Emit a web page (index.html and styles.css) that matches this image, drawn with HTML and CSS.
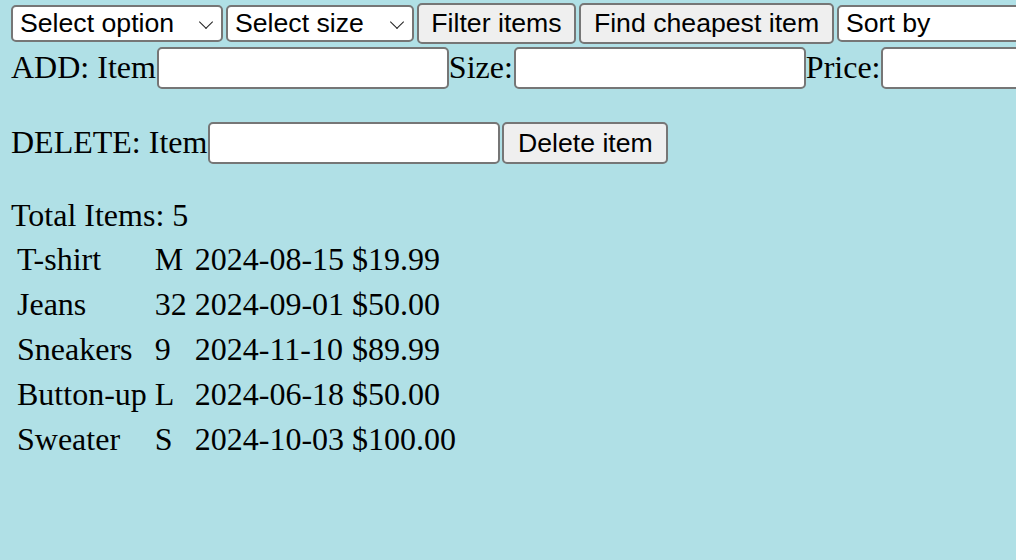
FILE: index.html
```html
<!DOCTYPE html>
<html>
<head>
<meta charset="utf-8">
<link rel="stylesheet" href="styles.css">
</head>
<body>
<div class="page">
  <div class="row row-tools">
    <span class="sel sel-option"><select class="ctl select"><option>Select option</option></select></span>
    <span class="sel sel-size"><select class="ctl select"><option>Select size</option></select></span>
    <button class="ctl btn btn-filter">Filter items</button>
    <button class="ctl btn btn-cheap">Find cheapest item</button>
    <span class="sel sel-sort"><select class="ctl select"><option>Sort by</option></select></span>
  </div>
  <div class="row row-add">
    <span class="label">ADD: Item</span>
    <input class="ctl field" type="text">
    <span class="label">Size:</span>
    <input class="ctl field" type="text">
    <span class="label">Price:</span>
    <input class="ctl field" type="text">
  </div>
  <div class="row row-delete">
    <span class="label">DELETE: Item</span>
    <input class="ctl field field-del" type="text">
    <button class="ctl btn btn-delete">Delete item</button>
  </div>
  <div class="total">Total Items: 5</div>
  <table class="items">
    <tr><td>T-shirt</td><td>M</td><td>2024-08-15</td><td>$19.99</td></tr>
    <tr><td>Jeans</td><td>32</td><td>2024-09-01</td><td>$50.00</td></tr>
    <tr><td>Sneakers</td><td>9</td><td>2024-11-10</td><td>$89.99</td></tr>
    <tr><td>Button-up</td><td>L</td><td>2024-06-18</td><td>$50.00</td></tr>
    <tr><td>Sweater</td><td>S</td><td>2024-10-03</td><td>$100.00</td></tr>
  </table>
</div>
</body>
</html>
```

FILE: styles.css
```css
html, body {
  margin: 0;
  padding: 0;
  background: #b0e0e6;
  overflow: hidden;
}

.page {
  padding: 3px 0 0 11px;
  font-family: "Liberation Serif", "Times New Roman", serif;
  font-size: 32px;
  line-height: 36.8px;
  color: #000;
  width: 1005px;
  overflow: hidden;
}

.row {
  display: flex;
  flex-wrap: nowrap;
  white-space: nowrap;
  overflow: hidden;
}

.row-tools {
  align-items: center;
  gap: 3px;
  height: 41px;
}

.row-add {
  margin-top: 3px;
  align-items: flex-start;
  height: 42px;
}

.row-delete {
  margin-top: 33px;
  align-items: flex-start;
  height: 42px;
}

.label {
  margin-top: 2px;
  padding-right: 1px;
  flex: none;
}

.ctl {
  box-sizing: border-box;
  margin: 0;
  font-family: "Liberation Sans", Arial, sans-serif;
  font-size: 26.67px;
  color: #000;
  border: 2px solid #767676;
  border-radius: 5px;
  flex: none;
}

.sel {
  position: relative;
  display: block;
  flex: none;
}

.select {
  -webkit-appearance: none;
  appearance: none;
  background: #fff;
  height: 37px;
  padding: 0 0 0 7px;
  line-height: 33px;
  display: block;
  width: 100%;
}

.sel::after {
  content: "";
  position: absolute;
  top: 12px;
  right: 12px;
  width: 9px;
  height: 9px;
  border-right: 1.6px solid #222;
  border-bottom: 1.6px solid #222;
  transform: rotate(45deg);
  pointer-events: none;
}

.sel-sort::after {
  display: none;
}

.sel-option { width: 212px; }
.sel-size { width: 188px; }
.sel-sort { width: 260px; }

.btn {
  background: #efefef;
  height: 41px;
  padding: 0;
  text-align: center;
  line-height: 37px;
}

.btn-filter { width: 159px; }
.btn-cheap { width: 255px; }

.field {
  background: #fff;
  height: 42px;
  width: 292px;
  padding: 0 6px;
}

.field-del {
  width: 292px;
}

.btn-delete {
  width: 166px;
  height: 42px;
  margin-left: 2px;
}

.total {
  margin-top: 33px;
}

.items {
  border-collapse: separate;
  border-spacing: 4px;
  margin-top: 1px;
  font-size: 32px;
  line-height: 37px;
}

.items td {
  padding: 2px;
  white-space: nowrap;
}
```
